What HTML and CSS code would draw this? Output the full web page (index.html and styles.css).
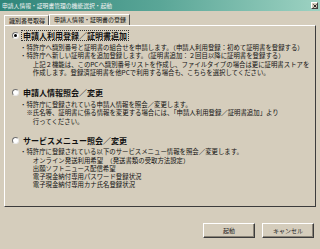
FILE: index.html
```html
<!DOCTYPE html>
<html lang="ja">
<head>
<meta charset="utf-8">
<link rel="stylesheet" href="styles.css">
</head>
<body>
<div class="window">
  <div class="titlebar">
    <span class="title">申請人情報・証明書管理の機能選択・起動</span>
    <span class="close"><svg width="5" height="5" viewBox="0 0 5 5"><path d="M0.5 0.5L4.5 4.5M4.5 0.5L0.5 4.5" stroke="#000" stroke-width="1"/></svg></span>
  </div>
  <div class="tabs">
    <div class="tab">識別番号取得</div>
    <div class="tab active">申請人情報・証明書の登録</div>
  </div>
  <div class="panel">
    <div class="section s1">
      <div class="option"><span class="radio checked"></span><span class="label focus">申請人利用登録／証明書追加</span></div>
      <div class="desc">
        <p>・特許庁へ識別番号と証明書の組合せを申請します。（申請人利用登録：初めて証明書を登録する）</p>
        <p>・特許庁へ新しい証明書を追加登録します。（証明書追加：２回目以降に証明書を登録する）</p>
        <p class="in2">上記２機能は、このPCへ識別番号リストを作成し、ファイルタイプの場合は更に証明書ストアを</p>
        <p class="in2">作成します。登録済証明書を他PCで利用する場合も、こちらを選択してください。</p>
      </div>
    </div>
    <div class="section s2">
      <div class="option"><span class="radio"></span><span class="label">申請人情報照会／変更</span></div>
      <div class="desc">
        <p>・特許庁に登録されている申請人情報を照会／変更します。</p>
        <p class="in1">※氏名等、証明書に係る情報を変更する場合には、「申請人利用登録／証明書追加」より</p>
        <p class="in2">行ってください。</p>
      </div>
    </div>
    <div class="section s3">
      <div class="option"><span class="radio"></span><span class="label">サービスメニュー照会／変更</span></div>
      <div class="desc">
        <p>・特許庁に登録されている以下のサービスメニュー情報を照会／変更します。</p>
        <p class="in2">オンライン発送利用希望　（発送書類の受取方法設定）</p>
        <p class="in2">出願ソフトニュース配信希望</p>
        <p class="in2">電子現金納付専用パスワード登録状況</p>
        <p class="in2">電子現金納付専用カナ氏名登録状況</p>
      </div>
    </div>
  </div>
  <div class="buttons">
    <button class="btn">起動</button>
    <button class="btn">キャンセル</button>
  </div>
</div>
</body>
</html>
```
FILE: styles.css
```css
* { box-sizing: border-box; }
html, body { margin: 0; padding: 0; }
body {
  width: 320px;
  height: 249px;
  background: #d5cdbc;
  font-family: "Noto Sans CJK JP", "Noto Sans", sans-serif;
  color: #111;
  overflow: hidden;
}
.window { width: 320px; height: 249px; display: flex; flex-direction: column; }
.titlebar {
  height: 11px;
  background: linear-gradient(to right, #2f857a 0%, #5aa697 50%, #9dd2c2 100%);
  display: flex;
  align-items: center;
  justify-content: space-between;
  padding: 0 2px 0 2px;
}
.title { color: #f4f4f4; font-size: 5.8px; line-height: 11px; white-space: nowrap; }
.close {
  width: 7px; height: 7px;
  background: #d5cdbc;
  border: 1px solid;
  border-color: #fff #404040 #404040 #fff;
  display: flex; align-items: center; justify-content: center;
}
.close svg { display: block; width: 4px; height: 4px; }
.tabs {
  display: flex;
  align-items: flex-end;
  height: 14px;
  padding-left: 4px;
}
.tab {
  font-size: 6px;
  line-height: 9px;
  height: 10px;
  padding: 0 3px 0 4px;
  border: 1px solid;
  border-color: #fff #555 transparent #fff;
  border-bottom: none;
  white-space: nowrap;
}
.tab.active { height: 11px; line-height: 10px; padding: 0 3px 0 4px; }
.panel {
  margin: 0 4px;
  height: 182px;
  border: 1px solid;
  border-color: #fff #3c3c3c #3c3c3c #fff;
  padding: 4px 0 0 7px;
}
.option { display: flex; align-items: center; height: 11px; }
.radio {
  width: 7px; height: 7px;
  border-radius: 50%;
  background: #fff;
  border: 1px solid;
  border-color: #707070 #e8e8e8 #e8e8e8 #707070;
  display: flex; align-items: center; justify-content: center;
  margin-right: 2px;
  flex: none;
}
.radio.checked::after {
  content: "";
  width: 3px; height: 3px;
  border-radius: 50%;
  background: #000;
}
.label {
  font-size: 8px;
  font-weight: bold;
  line-height: 9px;
  padding: 0 1px;
  border: 1px solid transparent;
  white-space: nowrap;
}
.label.focus { border: 1px dotted #333; }
.desc { margin-top: 2.5px; padding-left: 8px; }
.desc p {
  margin: 0;
  font-size: 6.4px;
  line-height: 8.6px;
  white-space: nowrap;
}
.desc p.in1 { padding-left: 6.4px; }
.desc p.in2 { padding-left: 12.8px; }
.s2 { margin-top: 9.4px; }
.s3 { margin-top: 8.2px; }
.s3 .desc p { line-height: 8.3px; }
.buttons {
  display: flex;
  justify-content: flex-end;
  gap: 7px;
  padding-right: 6px;
  margin-top: 16px;
}
.btn {
  width: 52px;
  height: 15px;
  padding: 0;
  font-family: inherit;
  font-size: 6px;
  color: #1c1c1c;
  background: #d5cdbc;
  border: 1px solid;
  border-color: #fff #3c3c3c #3c3c3c #fff;
  box-shadow: inset -1px -1px 0 #8a8478;
}
```
